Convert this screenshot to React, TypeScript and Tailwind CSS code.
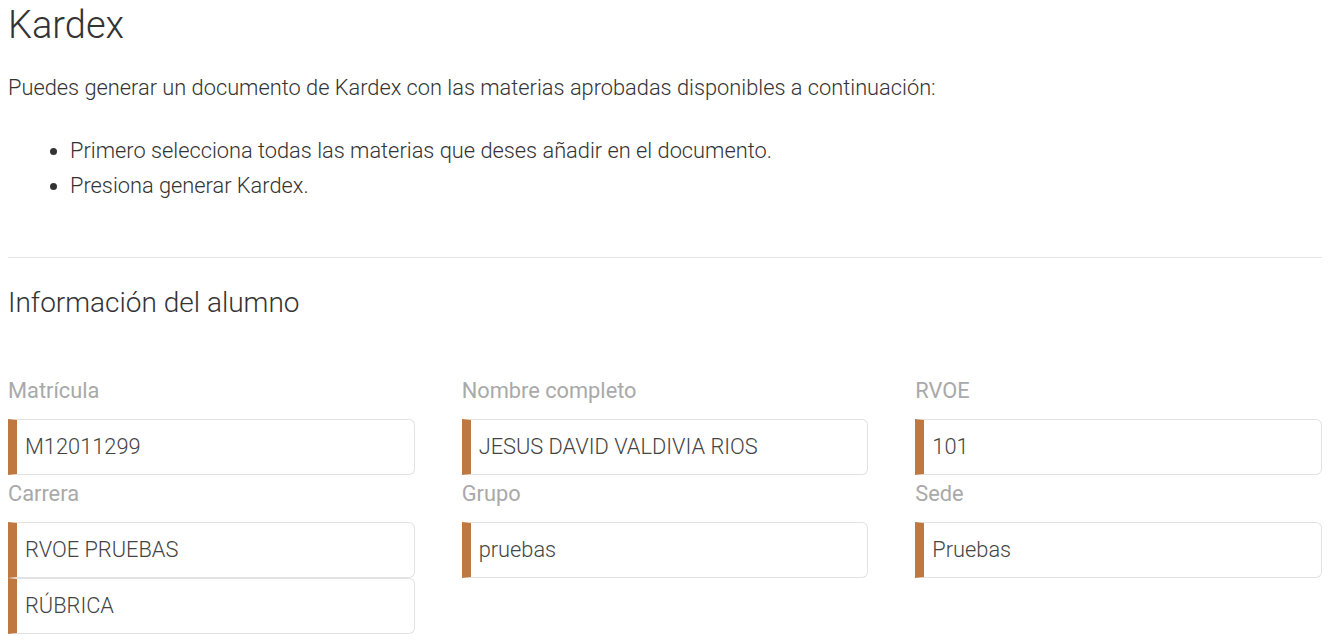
import React from "react";

function Field({ label, values }: { label?: string; values: string[] }) {
  return (
    <div className="flex flex-col">
      {label && (
        <div className="pt-[4px] text-[21.8px] leading-[30px] font-normal text-[#a9a9a9] mb-[13px]">{label}</div>
      )}
      {values.map((v, i) => (
        <div
          key={i}
          className="h-[56px] flex items-center rounded-r-[6px] border border-[#e2e2e2] border-l-[9px] border-l-[#c07841] pl-2 text-[21.8px] font-light text-[#444]"
        >
          {v}
        </div>
      ))}
    </div>
  );
}

export default function App() {
  return (
    <div
      className="bg-white pl-2 pr-[10px] text-[#333]"
      style={{ fontFamily: "Roboto, 'Noto Sans', sans-serif" }}
    >
      <h1 className="pt-[3px] text-[38px] leading-[1.2] font-light text-[#333]">Kardex</h1>
      <p className="mt-[22px] text-[21.8px] leading-[33px] font-light">
        Puedes generar un documento de Kardex con las materias aprobadas disponibles a continuación:
      </p>
      <ul className="mt-[29px] list-disc pl-[62px] text-[21.8px] leading-[35px] font-light">
        <li>Primero selecciona todas las materias que deses añadir en el documento.</li>
        <li>Presiona generar Kardex.</li>
      </ul>
      <hr className="mt-[54px] border-0 border-t border-[#e5e5e5]" />
      <h2 className="mt-[28px] text-[28px] leading-[1.2] font-light text-[#333]">Información del alumno</h2>
      <div className="mt-[53px] grid grid-cols-3 gap-x-[47px]">
        <Field label="Matrícula" values={["M12011299"]} />
        <Field label="Nombre completo" values={["JESUS DAVID VALDIVIA RIOS"]} />
        <Field label="RVOE" values={["101"]} />
        <Field label="Carrera" values={["RVOE PRUEBAS", "RÚBRICA"]} />
        <Field label="Grupo" values={["pruebas"]} />
        <Field label="Sede" values={["Pruebas"]} />
      </div>
    </div>
  );
}
